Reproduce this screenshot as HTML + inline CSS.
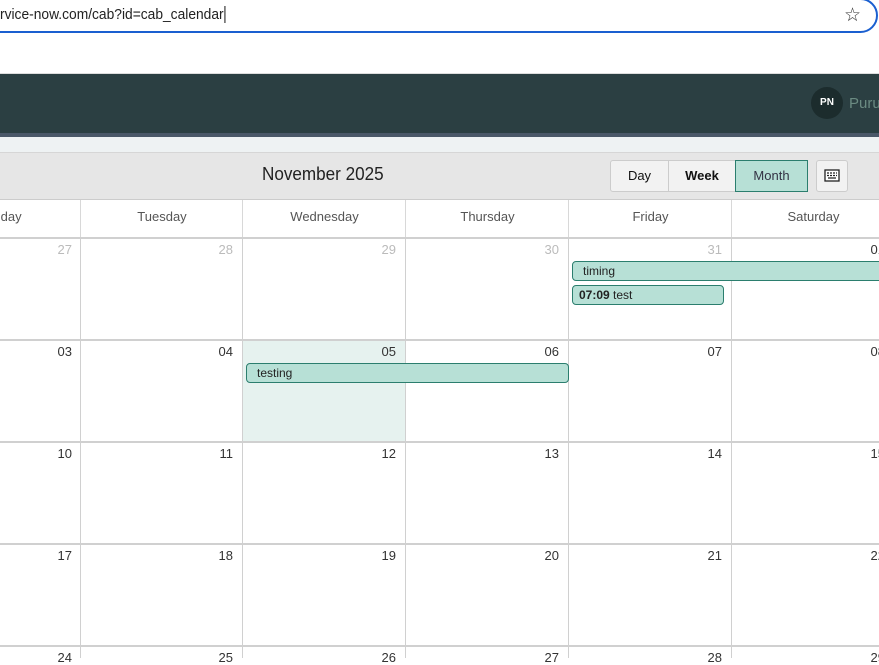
<!DOCTYPE html>
<html><head><meta charset="utf-8"><style>
*{margin:0;padding:0;box-sizing:border-box}
body{width:879px;height:658px;overflow:hidden;background:#fff;font-family:"Liberation Sans",sans-serif;position:relative}
.abs{position:absolute}
.url{left:-20px;top:-2px;width:898px;height:35px;border:2px solid #1a5fd0;border-radius:18px;background:#fff}
.urltext{left:0;top:6px;font-size:15px;color:#222;transform:scaleX(0.92);transform-origin:0 0;white-space:nowrap}
.hdr{left:0;top:73px;width:879px;height:60px;background:#2b3f42;border-top:1px solid #ddd}
.strip{left:0;top:133px;width:879px;height:4px;background:#4a5868}
.strip2{left:0;top:137px;width:879px;height:15px;background:#eef2f3}
.tb{left:0;top:152px;width:879px;height:48px;background:#e6e6e6;border-top:1px solid #d6d6d6;border-bottom:1px solid #ccc}
.btn{top:160px;height:32px;border:1px solid #ccc;background:#f2f2f2;font-size:13px;color:#111;text-align:center;line-height:30px}
.dh{top:200px;height:38px;border-left:1px solid #d8d8d8;font-size:13px;color:#555;text-align:center;line-height:34px}
.hline{left:0;width:879px;height:2px;background:#d0d0d0}
.vline{width:1px;background:#d0d0d0}
.num{font-size:13px;color:#333;text-align:right;width:150px}
.ev{height:20px;background:#b7e0d6;border:1px solid #2b7e6e;border-radius:4px;font-size:12px;color:#222;line-height:18px;padding-left:10px}
</style></head><body>
<div class="abs url"></div>
<div class="abs urltext">rvice-now.com/cab?id=cab_calendar<span style="border-left:1px solid #000;margin-left:1px"></span></div>
<div class="abs" style="left:844px;top:4px;font-size:19px;color:#333">☆</div>
<div class="abs hdr"></div>
<div class="abs" style="left:811px;top:87px;width:32px;height:32px;border-radius:50%;background:#1c2c2d;color:#fff;font-size:10px;font-weight:bold;text-align:center;line-height:32px">PN</div>
<div class="abs" style="left:849px;top:95px;font-size:15px;color:#6b8b82">Purus</div>
<div class="abs strip"></div>
<div class="abs strip2"></div>
<div class="abs tb"></div>
<div class="abs" style="left:262px;top:164px;font-size:18px;color:#222;transform:scaleX(0.95);transform-origin:0 0;white-space:nowrap">November 2025</div>
<div class="abs btn" style="left:610px;width:59px;border-radius:3px 0 0 3px">Day</div>
<div class="abs btn" style="left:668px;width:68px;font-weight:bold">Week</div>
<div class="abs btn" style="left:735px;width:73px;background:#b7e0d6;border-color:#2b7e6e;color:#334">Month</div>
<div class="abs btn" style="left:816px;width:32px;border-radius:3px;font-size:15px">
<svg width="16" height="14" viewBox="0 0 16 14" style="margin-top:8px"><rect x="1" y="1" width="14" height="11" fill="#fff" stroke="#222" stroke-width="1.3"/><path d="M3 4h2M6 4h2M9 4h2M12 4h1M3 6.5h2M6 6.5h2M9 6.5h2M12 6.5h1M4 9h8" stroke="#222" stroke-width="1.2"/></svg></div>

<div class="abs dh" style="left:-83px;width:163px;border-left:none">Monday</div>
<div class="abs dh" style="left:80px;width:163px">Tuesday</div>
<div class="abs dh" style="left:242px;width:164px">Wednesday</div>
<div class="abs dh" style="left:405px;width:164px">Thursday</div>
<div class="abs dh" style="left:568px;width:164px">Friday</div>
<div class="abs dh" style="left:731px;width:164px">Saturday</div>

<div class="abs" style="left:243px;top:341px;width:162px;height:101px;background:#e6f2ef"></div>

<div class="abs hline" style="top:237px"></div>
<div class="abs hline" style="top:339px"></div>
<div class="abs hline" style="top:441px"></div>
<div class="abs hline" style="top:543px"></div>
<div class="abs hline" style="top:645px"></div>
<div class="abs vline" style="left:80px;top:238px;height:420px"></div>
<div class="abs vline" style="left:242px;top:238px;height:420px"></div>
<div class="abs vline" style="left:405px;top:238px;height:420px"></div>
<div class="abs vline" style="left:568px;top:238px;height:420px"></div>
<div class="abs vline" style="left:731px;top:238px;height:420px"></div>

<div class="abs num" style="left:-78px;top:242px;color:#bbb">27</div>
<div class="abs num" style="left:83px;top:242px;color:#bbb">28</div>
<div class="abs num" style="left:246px;top:242px;color:#bbb">29</div>
<div class="abs num" style="left:409px;top:242px;color:#bbb">30</div>
<div class="abs num" style="left:572px;top:242px;color:#bbb">31</div>
<div class="abs num" style="left:735px;top:242px">01</div>
<div class="abs num" style="left:-78px;top:344px">03</div>
<div class="abs num" style="left:83px;top:344px">04</div>
<div class="abs num" style="left:246px;top:344px">05</div>
<div class="abs num" style="left:409px;top:344px">06</div>
<div class="abs num" style="left:572px;top:344px">07</div>
<div class="abs num" style="left:735px;top:344px">08</div>
<div class="abs num" style="left:-78px;top:446px">10</div>
<div class="abs num" style="left:83px;top:446px">11</div>
<div class="abs num" style="left:246px;top:446px">12</div>
<div class="abs num" style="left:409px;top:446px">13</div>
<div class="abs num" style="left:572px;top:446px">14</div>
<div class="abs num" style="left:735px;top:446px">15</div>
<div class="abs num" style="left:-78px;top:548px">17</div>
<div class="abs num" style="left:83px;top:548px">18</div>
<div class="abs num" style="left:246px;top:548px">19</div>
<div class="abs num" style="left:409px;top:548px">20</div>
<div class="abs num" style="left:572px;top:548px">21</div>
<div class="abs num" style="left:735px;top:548px">22</div>
<div class="abs num" style="left:-78px;top:650px">24</div>
<div class="abs num" style="left:83px;top:650px">25</div>
<div class="abs num" style="left:246px;top:650px">26</div>
<div class="abs num" style="left:409px;top:650px">27</div>
<div class="abs num" style="left:572px;top:650px">28</div>
<div class="abs num" style="left:735px;top:650px">29</div>

<div class="abs ev" style="left:572px;top:261px;width:320px">timing</div>
<div class="abs ev" style="left:572px;top:285px;width:152px;padding-left:6px"><b>07:09</b> test</div>
<div class="abs ev" style="left:246px;top:363px;width:323px">testing</div>
</body></html>
